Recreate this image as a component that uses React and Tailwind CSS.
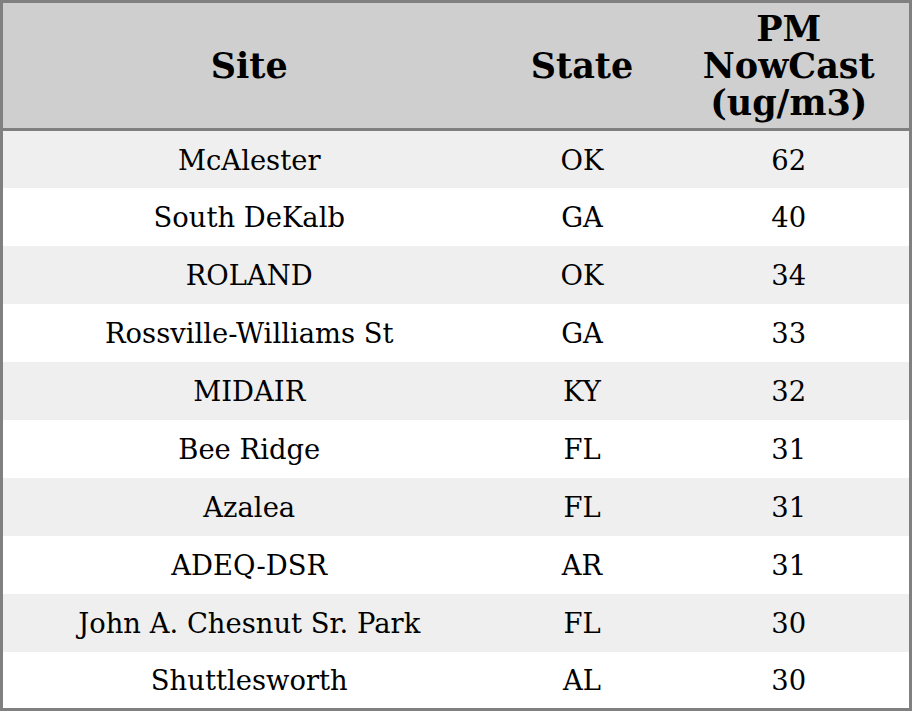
import React from 'react';

const rows = [
  ['McAlester', 'OK', 62],
  ['South DeKalb', 'GA', 40],
  ['ROLAND', 'OK', 34],
  ['Rossville-Williams St', 'GA', 33],
  ['MIDAIR', 'KY', 32],
  ['Bee Ridge', 'FL', 31],
  ['Azalea', 'FL', 31],
  ['ADEQ-DSR', 'AR', 31],
  ['John A. Chesnut Sr. Park', 'FL', 30],
  ['Shuttlesworth', 'AL', 30],
];

export default function App() {
  return (
    <div className="w-[912px] h-[711px] overflow-hidden bg-white font-['DejaVu_Serif',serif] text-black">
      <table className="w-full table-fixed border-collapse border-[3px] border-[#808080]">
        <colgroup>
          <col className="w-[494px]" />
          <col className="w-[173px]" />
          <col />
        </colgroup>
        <thead>
          <tr className="h-[128px] bg-[#cfcfcf] border-b-[3px] border-[#808080]">
            <th className="text-[35px] leading-[37px] font-bold text-center">Site</th>
            <th className="text-[35px] leading-[37px] font-bold text-center">State</th>
            <th className="text-[35px] leading-[37px] font-bold text-center">
              PM
              <br />
              NowCast
              <br />
              (ug/m3)
            </th>
          </tr>
        </thead>
        <tbody>
          {rows.map(([site, st, v], i) => (
            <tr key={site} className={i % 2 === 0 ? 'h-[58px] bg-[#efefef]' : 'h-[58px] bg-white'}>
              <td className="text-[27.4px] text-center pt-[2px]">{site}</td>
              <td className="text-[27.4px] text-center pt-[2px]">{st}</td>
              <td className="text-[27.4px] text-center pt-[2px]">{v}</td>
            </tr>
          ))}
        </tbody>
      </table>
    </div>
  );
}
